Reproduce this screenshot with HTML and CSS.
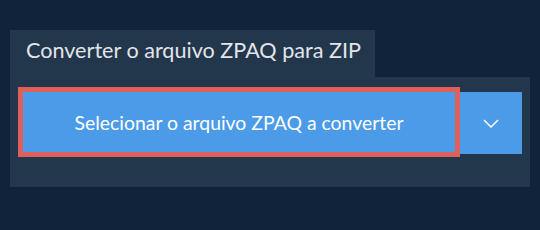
FILE: index.html
```html
<!DOCTYPE html>
<html lang="pt">
<head>
    <meta charset="UTF-8">
    <meta name="viewport" content="width=device-width, initial-scale=1.0">
    <title>Converter ZPAQ para ZIP</title>
    <link rel="stylesheet" href="styles.css">
</head>
<body>
    <div class="converter">
        <!-- Aba com o título -->
        <div class="tab">Converter o arquivo ZPAQ para ZIP</div>

        <!-- Painel com o botão -->
        <div class="panel">
            <div class="button-row">
                <button class="select-button">Selecionar o arquivo ZPAQ a converter</button>
                <button class="dropdown-button" aria-label="Mais opções">
                    <svg width="16" height="9" viewBox="0 0 16 9">
                        <polyline points="1,1 8,8 15,1" fill="none" stroke="#ffffff" stroke-width="1.5"/>
                    </svg>
                </button>
            </div>
        </div>
    </div>
</body>
</html>
```

FILE: styles.css
```css
body {
    margin: 0;
    padding: 30px 10px;
    background-color: #10233a;
    font-family: Lato, "Open Sans", sans-serif;
}

.converter {
    width: 520px;
}

/* Aba do título */
.tab {
    display: inline-block;
    box-sizing: border-box;
    width: 365px;
    height: 47px;
    padding: 7px 0 0 16px;
    background-color: #22364c;
    color: #e2e5e8;
    font-size: 21.6px;
}

/* Painel principal */
.panel {
    box-sizing: border-box;
    height: 110px;
    padding: 15px 8px 0 13px;
    background-color: #22364c;
}

.button-row {
    display: flex;
    align-items: flex-start;
}

button {
    border: none;
    background-color: #4b9be8;
    color: #ffffff;
    font-family: Lato, "Open Sans", sans-serif;
    cursor: pointer;
    padding: 0;
}

.select-button {
    width: 432px;
    height: 60px;
    outline: 5px solid #df5f5b;
    font-size: 19.4px;
}

.dropdown-button {
    width: 62px;
    height: 62px;
    margin-left: 5px;
    display: flex;
    align-items: center;
    justify-content: center;
}
```
